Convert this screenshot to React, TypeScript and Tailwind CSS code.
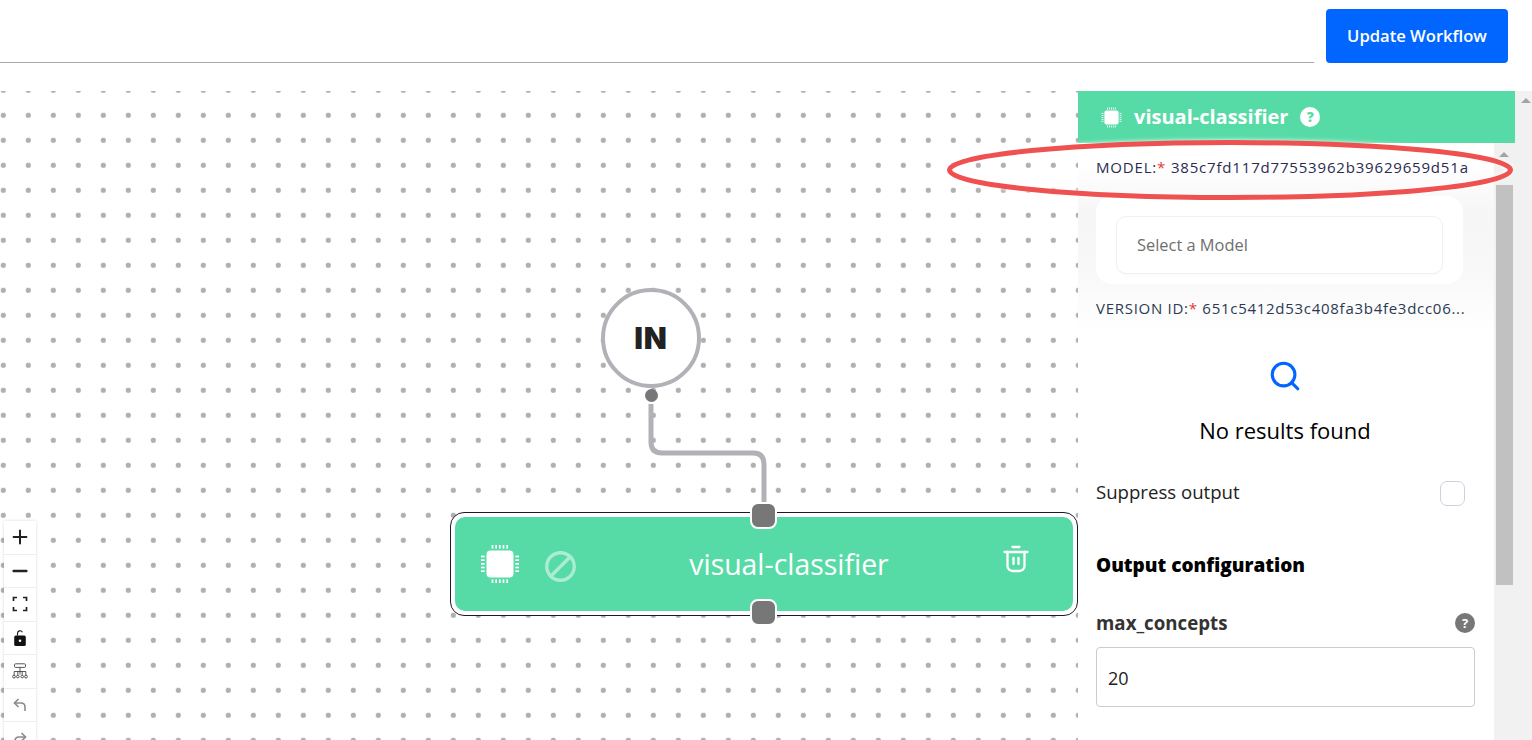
import { Ban, Minus, Plus, Search } from "lucide-react";

function ChipIcon({ className }: { className: string }) {
  const ticks = [7, 9.2, 11.4, 13.6, 15.8];
  return (
    <svg viewBox="0 0 24 24" className={className} fill="white">
      <rect x="3.9" y="3.9" width="16.2" height="16.2" rx="2.4" />
      {ticks.map((t) => (
        <g key={t}>
          <rect x={t} y="0.6" width="1" height="2.2" />
          <rect x={t} y="21.2" width="1" height="2.2" />
          <rect x="0.6" y={t} width="2.2" height="1" />
          <rect x="21.2" y={t} width="2.2" height="1" />
        </g>
      ))}
    </svg>
  );
}

function TrashIcon() {
  return (
    <svg viewBox="0 0 26 28" className="-mt-[10px] h-[28px] w-[26px] shrink-0" fill="none" stroke="white" strokeWidth="2.3" strokeLinecap="round" strokeLinejoin="round">
      <path d="M1.5 7h23" />
      <path d="M9.5 2h7" />
      <path d="M4.5 7v14a5 5 0 0 0 5 5h7a5 5 0 0 0 5-5V7" />
      <path d="M10.5 13v6M15.5 13v6" />
    </svg>
  );
}

function ControlButton({ children, last }: { children: React.ReactNode; last?: boolean }) {
  return (
    <div className={`flex h-[33.5px] w-full items-center justify-center bg-white ${last ? "" : "border-b border-[#eeeeee]"}`}>
      {children}
    </div>
  );
}

function Controls() {
  return (
    <div className="absolute left-[4px] top-[430px] flex w-[32px] flex-col shadow-[0_0_3px_rgba(0,0,0,0.15)]">
      <ControlButton>
        <Plus className="h-[22px] w-[22px] text-[#222222]" strokeWidth={2.2} />
      </ControlButton>
      <ControlButton>
        <Minus className="h-[22px] w-[22px] text-[#222222]" strokeWidth={2.6} />
      </ControlButton>
      <ControlButton>
        <svg viewBox="0 0 16 16" className="h-[16px] w-[16px]" fill="none" stroke="#222222" strokeWidth="1.7">
          <path d="M1.5 5V1.5H5M11 1.5h3.5V5M14.5 11v3.5H11M5 14.5H1.5V11" />
        </svg>
      </ControlButton>
      <ControlButton>
        <svg viewBox="0 0 16 18" className="h-[18px] w-[16px]">
          <path d="M5.5 6.5V4.4A2.6 2.6 0 0 1 10.4 3.2" fill="none" stroke="#111111" strokeWidth="1.1" />
          <rect x="2.2" y="6.5" width="11.6" height="10.5" rx="1.6" fill="#111111" />
          <circle cx="8" cy="11.8" r="1.3" fill="white" />
        </svg>
      </ControlButton>
      <ControlButton>
        <svg viewBox="0 0 16 16" className="h-[16px] w-[16px]" fill="none" stroke="#444444" strokeWidth="0.9">
          <rect x="2.5" y="0.8" width="11" height="3.6" rx="1" />
          <path d="M8 4.4V11.5M2.2 12V8.5h11.6V12M5.8 8.5V12M10.2 8.5V12" />
          <circle cx="2" cy="13.6" r="1.4" />
          <circle cx="5.8" cy="13.6" r="1.3" />
          <circle cx="10.2" cy="13.6" r="1.3" />
          <circle cx="14" cy="13.6" r="1.4" />
        </svg>
      </ControlButton>
      <ControlButton>
        <svg viewBox="0 0 16 16" className="h-[16px] w-[16px]" fill="none" stroke="#8a8a8a" strokeWidth="1.6">
          <path d="M6.5 2 2.5 6l4 4" />
          <path d="M2.5 6H9q4 0 4 4v4" />
        </svg>
      </ControlButton>
      <ControlButton last>
        <svg viewBox="0 0 16 16" className="h-[16px] w-[16px]" fill="none" stroke="#8a8a8a" strokeWidth="1.6">
          <path d="M9.5 2l4 4-4 4" />
          <path d="M13.5 6H7q-4 0-4 4v4" />
        </svg>
      </ControlButton>
    </div>
  );
}

function Canvas() {
  return (
    <div className="relative h-[649px] w-[1078px] shrink-0 overflow-hidden bg-white bg-[radial-gradient(circle,#b0b0b0_2.3px,transparent_3px)] bg-[length:25px_25px] bg-[position:-9.2px_11.8px]">
      <svg className="absolute left-0 top-0 h-full w-full" fill="none">
        <path d="M651 313 V351 Q651 362 662 362 H753 Q764 362 764 373 V412" stroke="#b1b1b7" strokeWidth="5" />
      </svg>

      {/* IN node */}
      <div className="absolute left-[601px] top-[197px] flex h-[100px] w-[100px] items-center justify-center rounded-full border-[4px] border-[#b1b1b7] bg-white">
        <span className="font-['Inter',sans-serif] text-[30px] font-black leading-none tracking-[0.03em] text-[#222222]">IN</span>
      </div>
      <div className="absolute left-[645px] top-[298px] h-[13px] w-[13px] rounded-full bg-[#777777]" />

      {/* model node */}
      <div className="absolute left-[450px] top-[421px] h-[104px] w-[628px] rounded-[14px] border border-[#1a1a2e] bg-white p-[4px]">
        <div className="flex h-full items-center rounded-[10px] bg-[#57dba6] pl-[25px] pr-[44px]">
          <ChipIcon className="h-[40px] w-[40px] shrink-0" />
          <Ban className="ml-[24px] mt-[4px] h-[33px] w-[33px] shrink-0 -scale-x-100 text-white opacity-50" strokeWidth={2.4} />
          <span className="flex-1 pr-[2px] text-center text-[28.4px] leading-none text-white">visual-classifier</span>
          <TrashIcon />
        </div>
      </div>
      <div className="absolute left-[750px] top-[411px] h-[27px] w-[27px] rounded-[8px] border-[2px] border-white bg-[#777777]" />
      <div className="absolute left-[750px] top-[508px] h-[27px] w-[27px] rounded-[8px] border-[2px] border-white bg-[#777777]" />

      <Controls />
    </div>
  );
}

function PanelBody() {
  return (
    <div className="h-[597px] w-[416px] shrink-0 overflow-hidden bg-white bg-[linear-gradient(180deg,#ffffff_20px,#f6f6f6_70px,#f8f8f8_130px,#ffffff_190px)] pl-[18px] pr-[20px]">
      <p className="mt-[14px] whitespace-nowrap text-[15px] leading-[20px] tracking-[0.82px] text-[#2b2b52]">
        MODEL:<span className="text-[#e53935]">*</span> 385c7fd117d77553962b39629659d51a
      </p>
      <div className="mt-[19px] h-[88px] w-[367px] rounded-[16px] bg-white p-[20px]">
        <div className="flex h-[58px] items-center rounded-[10px] border border-[#f0f0f0] pl-[20px] text-[16.4px] text-[#6f6f6f] shadow-[0_1px_2px_rgba(0,0,0,0.03)]">
          Select a Model
        </div>
      </div>
      <p className="mt-[14px] whitespace-nowrap text-[15px] leading-[20px] tracking-[0.72px] text-[#2b3a52]">
        VERSION ID:<span className="text-[#e53935]">*</span> 651c5412d53c408fa3b4fe3dcc06...
      </p>
      <div className="mt-[41px] flex flex-col items-center">
        <Search className="h-[34px] w-[34px] text-[#0066ff]" strokeWidth={2.2} />
        <p className="mt-[22px] text-[22px] leading-[30px] text-black">No results found</p>
      </div>
      <div className="mt-[32px] flex w-[369px] items-center justify-between">
        <span className="text-[18.6px] leading-[24px] text-[#222222]">Suppress output</span>
        <span className="mt-[4px] h-[25px] w-[25px] rounded-[7px] border border-[#ccd2dc] bg-white" />
      </div>
      <p className="mt-[47px] text-[19px] font-extrabold leading-[24px] text-black">Output configuration</p>
      <div className="mt-[34px] flex w-[379px] items-center justify-between">
        <span className="text-[18.7px] font-bold leading-[24px] text-[#333333]">max_concepts</span>
        <span className="flex h-[20px] w-[20px] items-center justify-center rounded-full bg-[#777777] text-[13px] font-bold leading-none text-white">?</span>
      </div>
      <div className="mt-[12px] flex h-[60px] w-[379px] items-center rounded-[4px] border border-[#cccccc] pl-[11px] pt-[2px] text-[18px] text-[#222222]">
        20
      </div>
    </div>
  );
}

function SidePanel() {
  return (
    <div className="flex h-[649px] min-w-0 flex-1 bg-[#f1f1f1]">
      <div className="flex w-[437px] shrink-0 flex-col">
        <div className="flex h-[52px] items-center bg-[#57dba6] pl-[23px]">
          <ChipIcon className="h-[21px] w-[21px]" />
          <span className="ml-[12px] text-[20px] font-bold leading-none text-white">visual-classifier</span>
          <span className="ml-[12px] flex h-[20px] w-[20px] items-center justify-center rounded-full bg-white text-[14px] font-extrabold leading-none text-[#57dba6]">?</span>
        </div>
        <div className="flex min-h-0 flex-1">
          <PanelBody />
          <div className="relative w-[21px] shrink-0 bg-[#f1f1f1]">
            <div className="absolute left-[5px] top-[9px] h-0 w-0 border-x-[5px] border-b-[5px] border-x-transparent border-b-[#a3a3a3]" />
            <div className="absolute left-[2px] top-[42px] h-[400px] w-[17px] bg-[#c1c1c1]" />
          </div>
        </div>
      </div>
      <div className="relative flex-1">
        <div className="absolute left-[6px] top-[7px] h-0 w-0 border-x-[5px] border-b-[5px] border-x-transparent border-b-[#a3a3a3]" />
      </div>
    </div>
  );
}

export default function App() {
  return (
    <div className="relative h-[740px] w-[1532px] overflow-hidden bg-white font-['Open_Sans','Noto_Sans',sans-serif]">
      <header className="flex h-[91px] items-start">
        <div className="mt-[62px] h-px w-[1314px] bg-[#a8a8a8]" />
        <button className="ml-[12px] mt-[9px] h-[54px] w-[182px] rounded-[4px] bg-[#0066ff] text-[16.6px] font-semibold text-white">
          Update Workflow
        </button>
      </header>
      <div className="flex">
        <Canvas />
        <SidePanel />
      </div>
      {/* red annotation drawn over the screenshot */}
      <svg className="pointer-events-none absolute left-[940px] top-[130px] h-[80px] w-[592px] drop-shadow-[0_0_2px_white]" fill="none">
        <ellipse cx="290" cy="40" rx="280.5" ry="27.5" stroke="#ef5050" strokeWidth="5" />
      </svg>
    </div>
  );
}
